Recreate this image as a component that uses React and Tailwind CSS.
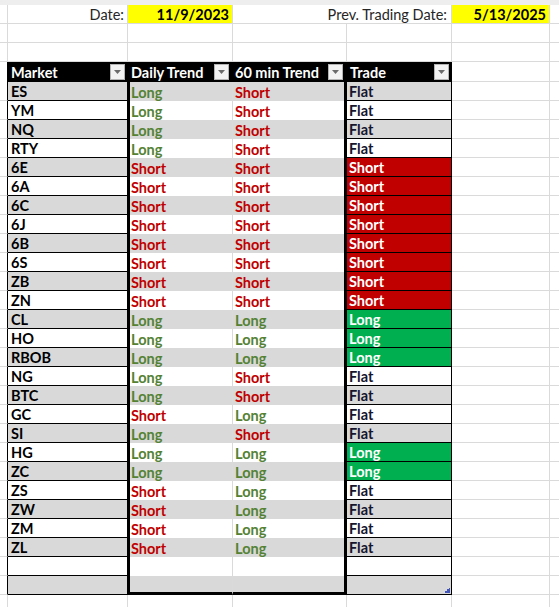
const rows = [
  ['ES', 'Long', 'Short', 'Flat'],
  ['YM', 'Long', 'Short', 'Flat'],
  ['NQ', 'Long', 'Short', 'Flat'],
  ['RTY', 'Long', 'Short', 'Flat'],
  ['6E', 'Short', 'Short', 'Short'],
  ['6A', 'Short', 'Short', 'Short'],
  ['6C', 'Short', 'Short', 'Short'],
  ['6J', 'Short', 'Short', 'Short'],
  ['6B', 'Short', 'Short', 'Short'],
  ['6S', 'Short', 'Short', 'Short'],
  ['ZB', 'Short', 'Short', 'Short'],
  ['ZN', 'Short', 'Short', 'Short'],
  ['CL', 'Long', 'Long', 'Long'],
  ['HO', 'Long', 'Long', 'Long'],
  ['RBOB', 'Long', 'Long', 'Long'],
  ['NG', 'Long', 'Short', 'Flat'],
  ['BTC', 'Long', 'Short', 'Flat'],
  ['GC', 'Short', 'Long', 'Flat'],
  ['SI', 'Long', 'Short', 'Flat'],
  ['HG', 'Long', 'Long', 'Long'],
  ['ZC', 'Long', 'Long', 'Long'],
  ['ZS', 'Short', 'Long', 'Flat'],
  ['ZW', 'Short', 'Long', 'Flat'],
  ['ZM', 'Short', 'Long', 'Flat'],
  ['ZL', 'Short', 'Long', 'Flat'],
  ['', '', '', ''],
  ['', '', '', ''],
];

const trendColor = { Long: 'text-[#548235]', Short: 'text-[#c00000]', '': '' };

function tradeClass(v, band) {
  if (v === 'Short') return 'bg-[#c00000] text-white';
  if (v === 'Long') return 'bg-[#00b050] text-white';
  return `${band} text-[#15152e]`;
}

function FilterButton() {
  return (
    <div className="w-[15px] h-[16px] shrink-0 box-border border border-[#b4b4b4] bg-[#f2f2f2] flex items-center justify-center">
      <svg width="7" height="4" viewBox="0 0 7 4">
        <path d="M0 0h7L3.5 4z" fill="#6b6b6b" />
      </svg>
    </div>
  );
}

// plain grid cell, the light spreadsheet gridlines
function Grid({ w, noRight }) {
  return (
    <div className={`${w} h-full shrink-0 box-border border-b border-[#dadada] ${noRight ? '' : 'border-r'}`} />
  );
}

export default function App() {
  return (
    <div className="w-[559px] h-[607px] overflow-hidden bg-white text-[14.5px] leading-[18px] font-['Lato',sans-serif] text-black">
      <div className="h-[5px] bg-[#eeeeee]" />

      {/* date row */}
      <div className="flex h-[19px]">
        <Grid w="w-[8px]" />
        <div className="w-[120px] h-full shrink-0 box-border border-r border-b border-[#dadada] flex justify-end items-center pt-[2px] pr-[3px] text-[#262626]">
          Date:
        </div>
        <div className="w-[105px] h-full shrink-0 box-border border-r border-b border-[#dadada] bg-[#ffff00] flex justify-end items-center pt-[2px] pr-[3px] font-bold">
          11/9/2023
        </div>
        <div className="w-[114px] h-full shrink-0 box-border border-b border-[#dadada]" />
        <div className="w-[105px] h-full shrink-0 box-border border-r border-b border-[#dadada] flex justify-end items-center pt-[2px] pr-[4px] whitespace-nowrap text-[#262626]">
          Prev. Trading Date:
        </div>
        <div className="w-[98px] h-full shrink-0 box-border border-r border-b border-[#dadada] bg-[#ffff00] flex justify-end items-center pt-[2px] pr-[3px] font-bold">
          5/13/2025
        </div>
        <Grid w="w-[9px]" noRight />
      </div>

      {/* two empty rows */}
      {[0, 1].map((i) => (
        <div key={i} className="flex h-[19px]">
          <Grid w="w-[8px]" />
          <Grid w="w-[120px]" />
          <Grid w="w-[105px]" />
          <Grid w="w-[114px]" />
          <Grid w="w-[105px]" />
          <Grid w="w-[98px]" />
          <Grid w="w-[9px]" noRight />
        </div>
      ))}

      {/* header */}
      <div className="flex h-[20px] font-bold text-white">
        <div className="w-[8px] h-full shrink-0 box-border border-r border-black" />
        <div className="w-[120px] h-full shrink-0 bg-black flex items-center justify-between pl-[3px] pr-[3px]">
          <span className="pt-[2px]">Market</span>
          <FilterButton />
        </div>
        <div className="w-[105px] h-full shrink-0 bg-black flex items-center justify-between pl-[3px] pr-[4px]">
          <span className="pt-[2px]">Daily Trend</span>
          <FilterButton />
        </div>
        <div className="w-[114px] h-full shrink-0 bg-black flex items-center justify-between pl-[2px] pr-[4px]">
          <span className="pt-[2px]">60 min Trend</span>
          <FilterButton />
        </div>
        <div className="w-[105px] h-full shrink-0 bg-black flex items-center justify-between pl-[3px] pr-[3px]">
          <span className="pt-[2px]">Trade</span>
          <FilterButton />
        </div>
        <Grid w="w-[98px]" />
        <Grid w="w-[9px]" noRight />
      </div>

      {/* data */}
      {rows.map(([m, d, h, t], i) => {
        const band = i % 2 === 0 ? 'bg-[#d9d9d9]' : 'bg-white';
        const last = i === rows.length - 1;
        return (
          <div key={i} className="flex h-[19px] font-bold">
            <div className="w-[8px] h-full shrink-0 box-border border-r border-b border-r-black border-b-[#dadada]" />
            <div className={`w-[120px] h-full shrink-0 box-border border-r border-b border-black pl-[3px] pt-[2px] flex items-center ${band}`}>
              {m}
            </div>
            <div className={`w-[105px] h-full shrink-0 box-border border-l-2 border-r border-l-black border-r-[#dadada] pl-[1px] pt-[2px] flex items-center ${last ? 'border-b-[3px] border-b-black' : ''} ${band} ${trendColor[d]}`}>
              {d}
            </div>
            <div className={`w-[114px] h-full shrink-0 box-border border-r-[3px] border-black pl-[2px] pt-[2px] flex items-center ${last ? 'border-b-[3px]' : ''} ${band} ${trendColor[h]}`}>
              {h}
            </div>
            <div className={`relative w-[105px] h-full shrink-0 box-border border-r border-b border-black pl-[2px] pt-[2px] flex items-center ${tradeClass(t, band)}`}>
              {t}
              {last && (
                <svg className="absolute right-[1px] bottom-[1px]" width="5" height="5" viewBox="0 0 5 5">
                  <path d="M5 0v5H0V3h2V1h2V0z" fill="#4455b8" />
                </svg>
              )}
            </div>
            <Grid w="w-[98px]" />
            <Grid w="w-[9px]" noRight />
          </div>
        );
      })}

      {/* partial row below */}
      <div className="flex h-[19px]">
        <Grid w="w-[8px]" />
        <Grid w="w-[120px]" />
        <Grid w="w-[105px]" />
        <Grid w="w-[114px]" />
        <Grid w="w-[105px]" />
        <Grid w="w-[98px]" />
        <Grid w="w-[9px]" noRight />
      </div>
    </div>
  );
}
